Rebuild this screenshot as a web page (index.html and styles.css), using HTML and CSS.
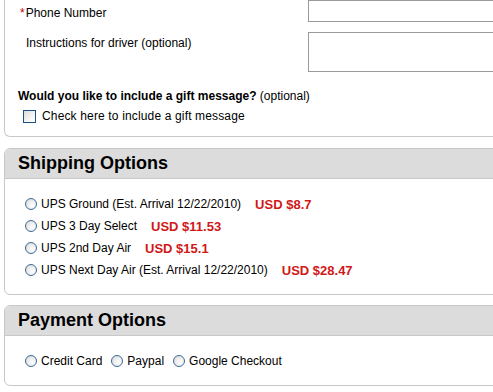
FILE: index.html
```html
<!DOCTYPE html>
<html lang="en">
<head>
  <meta charset="UTF-8">
  <meta name="viewport" content="width=device-width, initial-scale=1.0">
  <title>Checkout - Delivery</title>
  <link rel="stylesheet" href="styles.css">
</head>
<body>
  <div class="checkout">
    <div class="panel panel-cut">
      <div class="field-row">
        <label class="field-label field-label-main" for="phone"><span class="req">*</span>Phone Number</label>
        <input type="text" id="phone" class="text-input">
      </div>
      <div class="field-row field-row-top">
        <label class="field-label field-label-indent" for="instructions">Instructions for driver (optional)</label>
        <textarea id="instructions" class="text-area"></textarea>
      </div>
      <p class="gift-question"><strong>Would you like to include a gift message?</strong> (optional)</p>
      <label class="gift-check"><input type="checkbox" class="check"> Check here to include a gift message</label>
    </div>

    <div class="panel">
      <h2 class="panel-title">Shipping Options</h2>
      <ul class="options">
        <li><label><input type="radio" name="shipping" class="radio"> UPS Ground (Est. Arrival 12/22/2010)</label><span class="price">USD $8.7</span></li>
        <li><label><input type="radio" name="shipping" class="radio"> UPS 3 Day Select</label><span class="price">USD $11.53</span></li>
        <li><label><input type="radio" name="shipping" class="radio"> UPS 2nd Day Air</label><span class="price">USD $15.1</span></li>
        <li><label><input type="radio" name="shipping" class="radio"> UPS Next Day Air (Est. Arrival 12/22/2010)</label><span class="price">USD $28.47</span></li>
      </ul>
    </div>

    <div class="panel">
      <h2 class="panel-title">Payment Options</h2>
      <div class="payment">
        <label><input type="radio" name="payment" class="radio"> Credit Card</label>
        <label><input type="radio" name="payment" class="radio"> Paypal</label>
        <label><input type="radio" name="payment" class="radio"> Google Checkout</label>
      </div>
    </div>
  </div>
</body>
</html>
```

FILE: styles.css
```css
body {
  font-family: 'Liberation Sans', Arial, sans-serif;
  font-size: 12px;
  margin: 0;
  padding: 0;
  color: #000;
  background: #fff;
  overflow: hidden;
}

.checkout {
  padding-left: 4px;
  width: 540px;
}

.panel {
  border: 1px solid #c8c8c8;
  border-radius: 6px;
  margin-bottom: 10px;
  background: #fff;
}

.panel-cut {
  border-top: none;
  border-radius: 0 0 6px 6px;
  padding-bottom: 13px;
  margin-bottom: 11px;
}

.field-row {
  display: grid;
  grid-template-columns: 303px 1fr;
  align-items: center;
}

.field-row-top {
  align-items: start;
  margin-top: 10px;
}

.field-label {
  padding-left: 15px;
  line-height: 14px;
}

.field-label-main {
  padding-top: 3px;
}

.field-label-indent {
  padding-left: 21px;
  padding-top: 4px;
}

.req {
  color: #cc0000;
  margin-right: 1px;
}

.text-input {
  height: 22px;
  box-sizing: border-box;
  border: 1px solid #9a9a9a;
  margin: 0;
  font: inherit;
}

.text-area {
  height: 40px;
  box-sizing: border-box;
  border: 1px solid #9a9a9a;
  margin: 0;
  resize: none;
  font: inherit;
}

.gift-question {
  margin: 17px 0 0 13px;
  line-height: 14px;
}

.gift-check {
  display: flex;
  align-items: center;
  gap: 6px;
  margin: 6px 0 0 18px;
  line-height: 14px;
  letter-spacing: 0.15px;
}

.check {
  appearance: none;
  width: 13px;
  height: 13px;
  margin: 0;
  border: 1px solid #1c5180;
  background: linear-gradient(135deg, #dcdcd7 0%, #f4f4f2 60%, #fff 100%);
}

.panel-title {
  margin: 0;
  height: 29px;
  line-height: 29px;
  padding-left: 13px;
  font-size: 18px;
  font-weight: 700;
  background: #dcdcdc;
  border-bottom: 1px solid #c8c8c8;
  border-radius: 5px 5px 0 0;
}

.options {
  list-style: none;
  margin: 0;
  padding: 14px 0 13px 20px;
}

.options li {
  display: flex;
  align-items: center;
  height: 22px;
}

.options label,
.payment label {
  display: flex;
  align-items: center;
  gap: 4px;
}

.price {
  color: #d01818;
  font-weight: 700;
  font-size: 13px;
  margin-left: 14px;
}

.radio {
  appearance: none;
  width: 12px;
  height: 12px;
  margin: 0;
  border: 1px solid #3d6a99;
  border-radius: 50%;
  background: radial-gradient(circle at 65% 65%, #fff 0%, #eaeaea 55%, #d2d2cc 100%);
}

.payment {
  display: flex;
  gap: 9px;
  padding: 18px 0 17px 20px;
}
```
